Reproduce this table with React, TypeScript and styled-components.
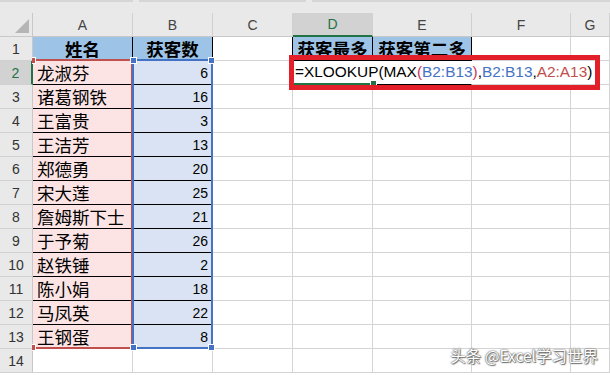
import React from 'react';
import styled, { createGlobalStyle } from 'styled-components';

const GlobalStyle = createGlobalStyle`
  html, body {
    margin: 0;
    padding: 0;
    background: #ffffff;
  }
  body {
    font-family: "Liberation Sans", "Noto Sans CJK SC", sans-serif;
    overflow: hidden;
  }
`;

const GRID = '#d4d4d4';
const INK = '#000000';
const GREEN = '#217346';
const HEAD_BG = '#e9e9e9';
const HEAD_SEL = '#d2d2d2';
const TITLE_BG = '#9dc3e6';
const NAME_BG = '#fce4e4';
const COUNT_BG = '#dae3f3';
const REF_BLUE = '#4472c4';
const REF_RED = '#c0504d';

const letters = ['A', 'B', 'C', 'D', 'E', 'F', 'G'];

const people: [string, number][] = [
  ['龙淑芬', 6],
  ['诸葛钢铁', 16],
  ['王富贵', 3],
  ['王洁芳', 13],
  ['郑德勇', 20],
  ['宋大莲', 25],
  ['詹姆斯下士', 21],
  ['于予菊', 26],
  ['赵铁锤', 2],
  ['陈小娟', 18],
  ['马凤英', 22],
  ['王钢蛋', 8],
];

const Page = styled.div`
  position: relative;
  width: 610px;
  height: 375px;
  overflow: hidden;
  background: #ffffff;
`;

const TopStrip = styled.div`
  height: 13px;
  background: ${HEAD_BG};
  display: flex;
  gap: 6px;
  align-items: flex-start;
`;

const BarEdge = styled.div<{ $w: number }>`
  width: ${(p) => p.$w}px;
  height: 2px;
  background: #d6d6d6;
  flex-shrink: 0;
`;

const Sheet = styled.div`
  position: relative;
  display: grid;
  grid-template-columns: 33px 100px 80px 80px 80px 99px 99px 1fr;
  grid-auto-rows: 24px;
`;

const Corner = styled.div`
  position: relative;
  background: ${HEAD_BG};
  border-right: 1px solid #c8c8c8;
  border-bottom: 1px solid #c8c8c8;
  &::after {
    content: '';
    position: absolute;
    right: 3px;
    bottom: 3px;
    border-left: 14px solid transparent;
    border-bottom: 14px solid #b5b5b5;
  }
`;

const ColHead = styled.div<{ $sel?: boolean }>`
  display: flex;
  align-items: center;
  justify-content: center;
  background: ${(p) => (p.$sel ? HEAD_SEL : HEAD_BG)};
  border-right: 1px solid #d0d0d0;
  border-bottom: ${(p) => (p.$sel ? `2px solid ${GREEN}` : '1px solid #c8c8c8')};
  color: ${(p) => (p.$sel ? GREEN : '#444444')};
  font-size: 14px;
`;

const RowHead = styled.div<{ $sel?: boolean }>`
  display: flex;
  align-items: center;
  justify-content: center;
  background: ${(p) => (p.$sel ? HEAD_SEL : HEAD_BG)};
  border-right: ${(p) => (p.$sel ? `2px solid ${GREEN}` : '1px solid #c8c8c8')};
  border-bottom: 1px solid #d0d0d0;
  color: ${(p) => (p.$sel ? GREEN : '#333333')};
  font-size: 14px;
`;

const Cell = styled.div<{
  $bg?: string;
  $right?: string;
  $bottom?: string;
  $align?: 'flex-start' | 'flex-end' | 'center';
  $bold?: boolean;
  $cjk?: boolean;
}>`
  display: flex;
  align-items: center;
  justify-content: ${(p) => p.$align || 'flex-start'};
  padding: 0 4px;
  background: ${(p) => p.$bg || '#ffffff'};
  border-right: 1px solid ${(p) => p.$right || GRID};
  border-bottom: 1px solid ${(p) => p.$bottom || GRID};
  font-family: ${(p) =>
    p.$cjk ? '"Noto Sans CJK SC", sans-serif' : '"Liberation Sans", "Noto Sans CJK SC", sans-serif'};
  font-size: ${(p) => (p.$cjk ? '17.5px' : '14px')};
  font-weight: ${(p) => (p.$bold ? 700 : 400)};
  color: ${INK};
  white-space: nowrap;
`;

const ActiveCell = styled.div`
  position: relative;
  z-index: 1;
  display: flex;
  align-items: center;
  padding: 0 2px;
  background: #ffffff;
  border-bottom: 2px solid ${GREEN};
  font-family: "Liberation Sans", "Noto Sans CJK SC", sans-serif;
  font-size: 15.4px;
  color: ${INK};
  white-space: nowrap;
  overflow: visible;
  &::after {
    content: '';
    position: absolute;
    right: -4px;
    bottom: -4px;
    width: 5px;
    height: 5px;
    background: ${GREEN};
    border: 1px solid #ffffff;
  }
`;

const Ref = styled.span<{ $c: string }>`
  color: ${(p) => p.$c};
`;

// absolutely placed grid child: its grid area is the containing block, it takes no slot
const RangeFrame = styled.div<{ $col: number; $color: string; $openLeft?: boolean }>`
  position: absolute;
  grid-column: ${(p) => `${p.$col} / ${p.$col + 1}`};
  grid-row: 3 / 15;
  top: -2px;
  bottom: 0;
  left: -1px;
  right: 0;
  z-index: ${(p) => (p.$openLeft ? 2 : 3)};
  border: 2px solid ${(p) => p.$color};
  border-left-color: ${(p) => (p.$openLeft ? 'transparent' : p.$color)};
  pointer-events: none;
`;

const Handle = styled.span<{ $color: string; $v: 'top' | 'bottom'; $h: 'left' | 'right'; $narrow?: boolean }>`
  position: absolute;
  ${(p) => p.$v}: -4px;
  ${(p) => p.$h}: ${(p) => (p.$narrow ? '-2px' : '-4px')};
  width: ${(p) => (p.$narrow ? '3px' : '5px')};
  height: 5px;
  background: ${(p) => p.$color};
  border: 1px solid #ffffff;
  border-left-width: ${(p) => (p.$narrow ? 0 : 1)}px;
`;

const Callout = styled.div`
  position: absolute;
  left: 289px;
  top: 55px;
  width: 311px;
  height: 35px;
  box-sizing: border-box;
  border: 5px solid #e3202a;
  z-index: 5;
  pointer-events: none;
`;

const Watermark = styled.div`
  position: absolute;
  right: 12px;
  bottom: 9px;
  z-index: 6;
  font-family: "Noto Sans CJK SC", sans-serif;
  font-size: 15.5px;
  color: #ffffff;
  text-shadow: 0 0 1px #555, 0 0 2px #666, 1px 1px 1px #777;
  white-space: nowrap;
`;

const Frame: React.FC<{ col: number; color: string; openLeft?: boolean }> = ({ col, color, openLeft }) => (
  <RangeFrame $col={col} $color={color} $openLeft={openLeft}>
    <Handle $color={color} $v="top" $h="left" $narrow={openLeft} />
    <Handle $color={color} $v="bottom" $h="left" $narrow={openLeft} />
    {!openLeft && <Handle $color={color} $v="top" $h="right" />}
    {!openLeft && <Handle $color={color} $v="bottom" $h="right" />}
  </RangeFrame>
);

const Formula = () => (
  <>
    =XLOOKUP(MAX<Ref $c="#c8365a">(</Ref>
    <Ref $c={REF_BLUE}>B2:B13</Ref>
    <Ref $c="#c8365a">)</Ref>,<Ref $c={REF_BLUE}>B2:B13</Ref>,<Ref $c={REF_RED}>A2:A13</Ref>)
  </>
);

const renderRow = (r: number) => {
  const person = r >= 2 && r <= 13 ? people[r - 2] : null;
  const cells: React.ReactNode[] = [];

  cells.push(
    <RowHead key="h" $sel={r === 2}>
      {r}
    </RowHead>
  );

  // A
  if (r === 1) {
    cells.push(<Cell key="a" $bg={TITLE_BG} $right={INK} $bottom={INK} $align="center" $bold $cjk>姓名</Cell>);
  } else if (person) {
    cells.push(<Cell key="a" $bg={NAME_BG} $right={INK} $bottom={INK} $cjk>{person[0]}</Cell>);
  } else {
    cells.push(<Cell key="a" />);
  }

  // B
  if (r === 1) {
    cells.push(<Cell key="b" $bg={TITLE_BG} $right={INK} $bottom={INK} $align="center" $bold $cjk>获客数</Cell>);
  } else if (person) {
    cells.push(<Cell key="b" $bg={COUNT_BG} $right={INK} $bottom={INK} $align="flex-end">{person[1]}</Cell>);
  } else {
    cells.push(<Cell key="b" />);
  }

  // C
  cells.push(<Cell key="c" $right={r === 1 ? INK : GRID} />);

  // D, E, F, G
  if (r === 1) {
    cells.push(<Cell key="d" $bg={TITLE_BG} $right={INK} $bottom={INK} $align="center" $bold $cjk>获客最多</Cell>);
    cells.push(<Cell key="e" $bg={TITLE_BG} $right={INK} $bottom={INK} $align="center" $bold $cjk>获客第二多</Cell>);
    cells.push(<Cell key="f" />);
    cells.push(<Cell key="g" />);
  } else if (r === 2) {
    cells.push(
      <ActiveCell key="d">
        <Formula />
      </ActiveCell>
    );
    cells.push(<Cell key="e" $right="#ffffff" $bottom={INK} />);
    cells.push(<Cell key="f" $right="#ffffff" />);
    cells.push(<Cell key="g" />);
  } else {
    ['d', 'e', 'f', 'g'].forEach((k) => cells.push(<Cell key={k} />));
  }

  return <React.Fragment key={r}>{cells}</React.Fragment>;
};

const App: React.FC = () => {
  return (
    <Page>
      <GlobalStyle />
      <TopStrip>
        <BarEdge $w={133} />
        <BarEdge $w={167} />
        <BarEdge $w={304} />
      </TopStrip>
      <Sheet>
        <Corner />
        {letters.map((l) => (
          <ColHead key={l} $sel={l === 'D'}>
            {l}
          </ColHead>
        ))}
        {Array.from({ length: 14 }, (_, i) => renderRow(i + 1))}
        <Frame col={2} color={REF_RED} openLeft />
        <Frame col={3} color={REF_BLUE} />
      </Sheet>
      <Callout />
      <Watermark>头条 @Excel学习世界</Watermark>
    </Page>
  );
};

export default App;
